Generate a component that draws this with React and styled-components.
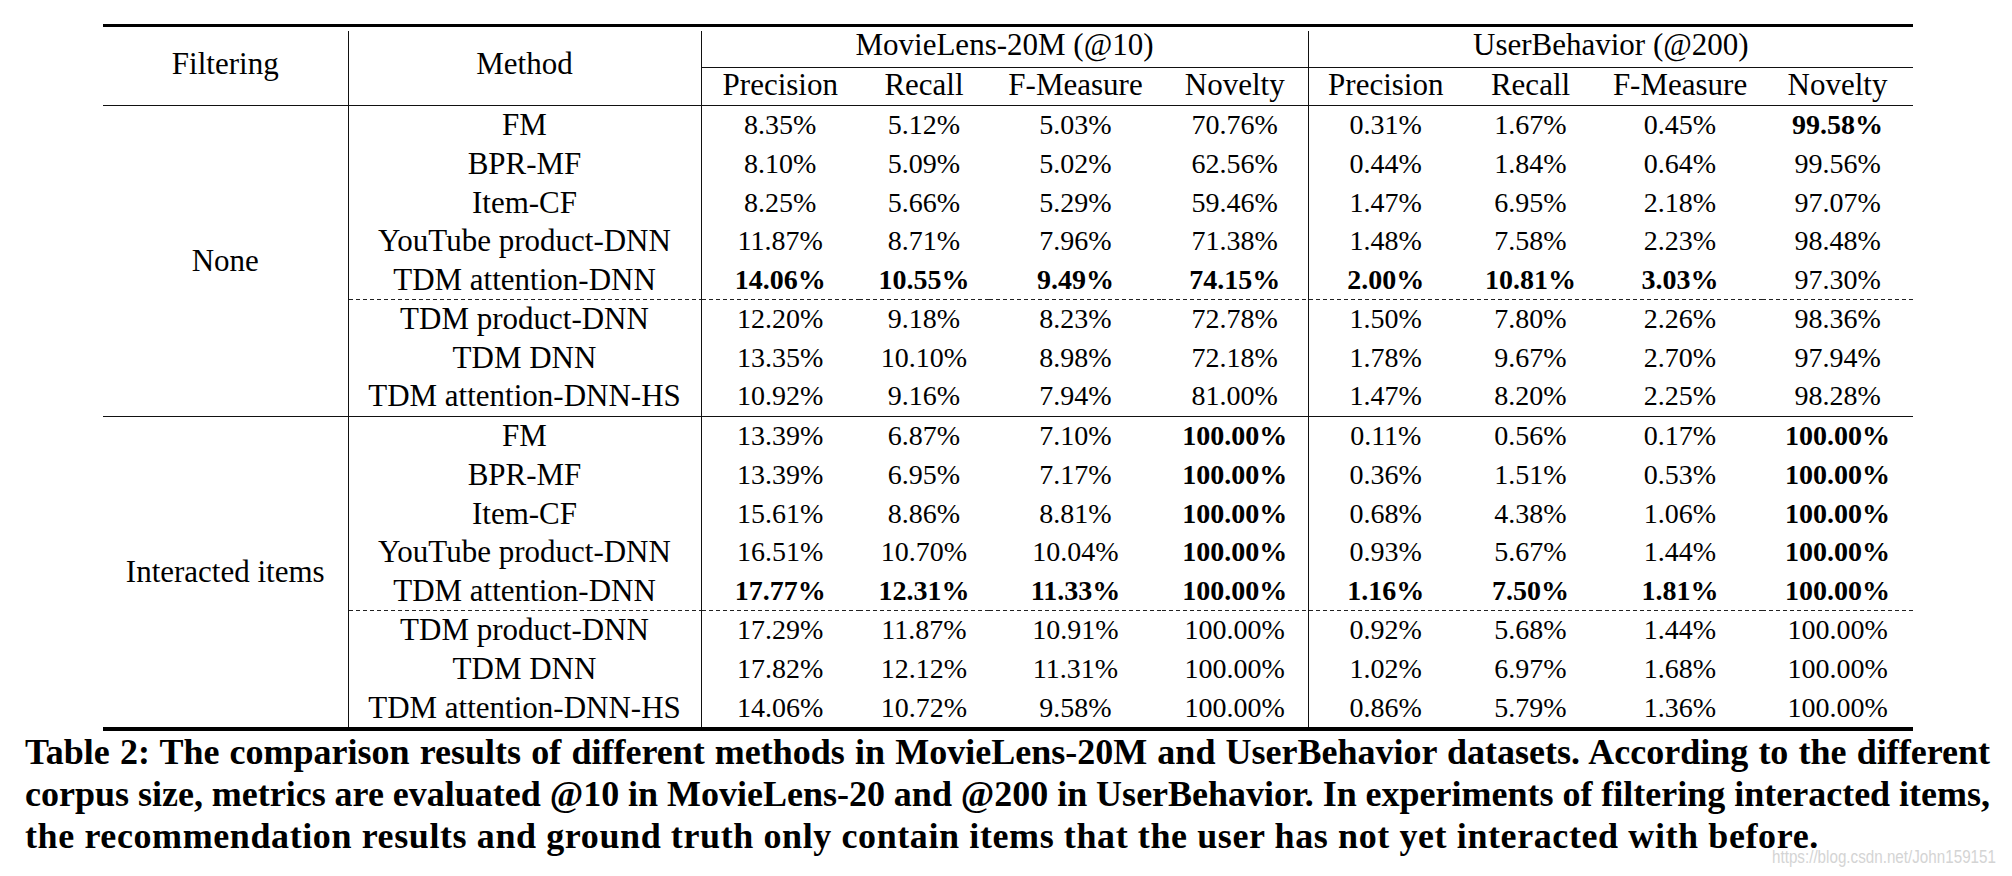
import React from 'react';
import styled, { createGlobalStyle, css } from 'styled-components';

const GlobalStyle = createGlobalStyle`
  html, body {
    margin: 0;
    padding: 0;
    background: #ffffff;
  }
  * {
    box-sizing: border-box;
  }
`;

const SERIF = `'Liberation Serif', 'Times New Roman', serif`;
const LINE = '#111111';

export const Page = styled.div`
  position: relative;
  width: 2012px;
  height: 876px;
  padding: 24px 0 0 25px;
  overflow: hidden;
  background: #ffffff;
  color: #000000;
  font-family: ${SERIF};
`;

export const TableBlock = styled.div`
  width: 1810px;
  margin-left: 78px;
`;

export const Rule = styled.div`
  height: ${({ $h }) => $h}px;
  background: #000000;
  margin-bottom: ${({ $gap }) => $gap || 0}px;
`;

export const Table = styled.table`
  width: 1810px;
  border-collapse: collapse;
  table-layout: fixed;
`;

const lines = css`
  ${({ $vline }) => $vline && `border-right: 1.5px solid ${LINE};`}
  ${({ $rule }) => $rule && `border-bottom: 1.5px solid ${LINE};`}
  ${({ $cmid }) => $cmid && `border-bottom: 1px solid ${LINE};`}
  ${({ $mid }) => $mid && `border-top: 1.5px solid ${LINE};`}
  ${({ $dash }) =>
    $dash &&
    `
    background-image: repeating-linear-gradient(to right, #222222 0 4px, transparent 4px 7px);
    background-size: 100% 1px;
    background-repeat: no-repeat;
    background-position: 0 0;
  `}
`;

export const HeadCell = styled.th`
  padding: 0 0 ${({ $lift }) => $lift || 0}px 0;
  font-family: ${SERIF};
  font-weight: normal;
  font-size: 31px;
  line-height: ${({ $lh }) => $lh || 34}px;
  text-align: center;
  vertical-align: ${({ $top }) => ($top ? 'top' : 'middle')};
  white-space: nowrap;
  ${lines}
`;

export const HeadRow = styled.tr`
  height: ${({ $h }) => $h}px;
`;

export const BodyRow = styled.tr`
  height: ${({ $h }) => $h}px;
`;

export const Cell = styled.td`
  padding: 0;
  font-family: ${SERIF};
  font-size: ${({ $label }) => ($label ? 31 : 28)}px;
  font-weight: ${({ $bold }) => ($bold ? 'bold' : 'normal')};
  line-height: 32px;
  text-align: center;
  vertical-align: middle;
  white-space: nowrap;
  ${lines}
`;

export const Caption = styled.div`
  width: 1965px;
  font-family: ${SERIF};
  font-weight: bold;
  font-size: 36px;
  line-height: 42px;
`;

export const CaptionLine = styled.div`
  white-space: nowrap;
  letter-spacing: ${({ $justify }) => ($justify ? 0 : 0.6)}px;
  word-spacing: ${({ $justify }) => ($justify ? -3 : 0)}px;
  text-align: ${({ $justify }) => ($justify ? 'justify' : 'left')};
  text-align-last: ${({ $justify }) => ($justify ? 'justify' : 'left')};
`;

export const Watermark = styled.div`
  position: absolute;
  left: 1772px;
  top: 846px;
  font-family: 'Liberation Sans', Arial, sans-serif;
  font-size: 19px;
  color: #d4d4d4;
  white-space: nowrap;
  transform: scaleX(0.8);
  transform-origin: left center;
  text-shadow: 0 0 1px #ffffff;
`;

const widths = [245, 353, 158, 130, 173, 146, 155, 135, 164, 151];
const metrics = ['Precision', 'Recall', 'F-Measure', 'Novelty'];
const rowHeights = [39, 39, 39, 38, 39, 39, 39, 39];

const groups = [
  {
    filter: 'None',
    rows: [
      ['FM', '8.35%', '5.12%', '5.03%', '70.76%', '0.31%', '1.67%', '0.45%', '*99.58%'],
      ['BPR-MF', '8.10%', '5.09%', '5.02%', '62.56%', '0.44%', '1.84%', '0.64%', '99.56%'],
      ['Item-CF', '8.25%', '5.66%', '5.29%', '59.46%', '1.47%', '6.95%', '2.18%', '97.07%'],
      ['YouTube product-DNN', '11.87%', '8.71%', '7.96%', '71.38%', '1.48%', '7.58%', '2.23%', '98.48%'],
      ['TDM attention-DNN', '*14.06%', '*10.55%', '*9.49%', '*74.15%', '*2.00%', '*10.81%', '*3.03%', '97.30%'],
      ['TDM product-DNN', '12.20%', '9.18%', '8.23%', '72.78%', '1.50%', '7.80%', '2.26%', '98.36%'],
      ['TDM DNN', '13.35%', '10.10%', '8.98%', '72.18%', '1.78%', '9.67%', '2.70%', '97.94%'],
      ['TDM attention-DNN-HS', '10.92%', '9.16%', '7.94%', '81.00%', '1.47%', '8.20%', '2.25%', '98.28%'],
    ],
  },
  {
    filter: 'Interacted items',
    rows: [
      ['FM', '13.39%', '6.87%', '7.10%', '*100.00%', '0.11%', '0.56%', '0.17%', '*100.00%'],
      ['BPR-MF', '13.39%', '6.95%', '7.17%', '*100.00%', '0.36%', '1.51%', '0.53%', '*100.00%'],
      ['Item-CF', '15.61%', '8.86%', '8.81%', '*100.00%', '0.68%', '4.38%', '1.06%', '*100.00%'],
      ['YouTube product-DNN', '16.51%', '10.70%', '10.04%', '*100.00%', '0.93%', '5.67%', '1.44%', '*100.00%'],
      ['TDM attention-DNN', '*17.77%', '*12.31%', '*11.33%', '*100.00%', '*1.16%', '*7.50%', '*1.81%', '*100.00%'],
      ['TDM product-DNN', '17.29%', '11.87%', '10.91%', '100.00%', '0.92%', '5.68%', '1.44%', '100.00%'],
      ['TDM DNN', '17.82%', '12.12%', '11.31%', '100.00%', '1.02%', '6.97%', '1.68%', '100.00%'],
      ['TDM attention-DNN-HS', '14.06%', '10.72%', '9.58%', '100.00%', '0.86%', '5.79%', '1.36%', '100.00%'],
    ],
  },
];

const captionLines = [
  'Table 2: The comparison results of different methods in MovieLens-20M and UserBehavior datasets. According to the different',
  'corpus size, metrics are evaluated @10 in MovieLens-20 and @200 in UserBehavior. In experiments of filtering interacted items,',
  'the recommendation results and ground truth only contain items that the user has not yet interacted with before.',
];

const GroupRows = ({ group, first }) =>
  group.rows.map(([method, ...values], i) => {
    const mid = !first && i === 0;
    const dash = i === 5;
    return (
      <BodyRow key={method} $h={rowHeights[i]}>
        {i === 0 && (
          <Cell $label $vline $mid={mid} rowSpan={group.rows.length}>
            {group.filter}
          </Cell>
        )}
        <Cell $label $vline $mid={mid} $dash={dash}>
          {method}
        </Cell>
        {values.map((v, j) => {
          const bold = v.startsWith('*');
          return (
            <Cell key={j} $bold={bold} $vline={j === 3} $mid={mid} $dash={dash}>
              {bold ? v.slice(1) : v}
            </Cell>
          );
        })}
      </BodyRow>
    );
  });

const App = () => {
  return (
    <Page>
      <GlobalStyle />
      <TableBlock>
        <Rule $h={3} $gap={4} />
        <Table>
          <colgroup>
            {widths.map((w, i) => (
              <col key={i} style={{ width: w }} />
            ))}
          </colgroup>
          <thead>
            <HeadRow $h={36}>
              <HeadCell rowSpan={2} $vline $rule $lift={8}>
                Filtering
              </HeadCell>
              <HeadCell rowSpan={2} $vline $rule $lift={8}>
                Method
              </HeadCell>
              <HeadCell colSpan={4} $vline $cmid $top $lh={27}>
                MovieLens-20M (@10)
              </HeadCell>
              <HeadCell colSpan={4} $cmid $top $lh={27}>
                UserBehavior (@200)
              </HeadCell>
            </HeadRow>
            <HeadRow $h={38}>
              {[...metrics, ...metrics].map((m, i) => (
                <HeadCell key={i} $rule $vline={i === 3} $lift={3}>
                  {m}
                </HeadCell>
              ))}
            </HeadRow>
          </thead>
          <tbody>
            {groups.map((g, i) => (
              <GroupRows key={g.filter} group={g} first={i === 0} />
            ))}
          </tbody>
        </Table>
        <Rule $h={3.5} />
      </TableBlock>
      <Caption>
        {captionLines.map((line, i) => (
          <CaptionLine key={i} $justify={i < 2}>
            {line}
          </CaptionLine>
        ))}
      </Caption>
      <Watermark>https://blog.csdn.net/John159151</Watermark>
    </Page>
  );
};

export default App;
